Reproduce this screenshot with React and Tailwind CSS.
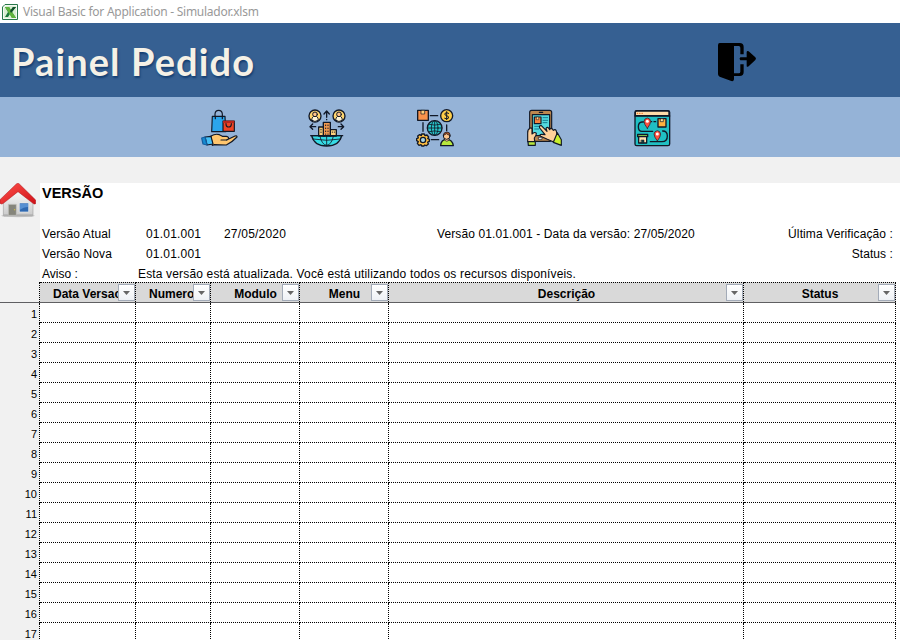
import React from "react";

const ARIAL = "font-['Liberation_Sans',Arial,sans-serif]";

const COLUMNS = [
  { label: "Data Versao", box: "pl-[13px]", align: "" },
  { label: "Numero", box: "pl-[13px]", align: "" },
  { label: "Modulo", box: "pl-px", align: "justify-center" },
  { label: "Menu", box: "pl-px", align: "justify-center" },
  { label: "Descrição", box: "pl-px", align: "justify-center" },
  { label: "Status", box: "pl-px", align: "justify-center" },
];

const GRID = "grid grid-cols-[40px_96px_75px_89px_89px_355px_152px] w-[896px]";

function ExcelLogo() {
  return (
    <svg className="h-4 w-4 shrink-0" viewBox="0 0 16 16">
      <path d="M3 .5h12.5v15H.5V3z" fill="#f4faf2" stroke="#28784a" />
      <path d="M2 4 4 2h10v12H2z" fill="#d9efd2" />
      <path d="M3 3h4l2 3 2-3h3l-4 5 4 6h-4L8 10l-2 3H3l3-5z" fill="#1d7a3c" />
      <path d="m3 3 4 0 7 11h-4z" fill="#60b43c" />
      <path d="m11 3-3 4 1 2 5-6z" fill="#124f2b" />
    </svg>
  );
}

function ExitIcon() {
  return (
    <svg className="h-[60px] w-20" viewBox="0 0 240 180">
      <path d="M59 39h60q12 0 12 12v22h-10V53q0-5-5-5h-14v82h14q5 0 5-5v-22h10v23q0 12-12 12h-17v10q0 7-8 5l-31-11q-9-3-9-11V46q0-7 5-7z" fill="#000" />
      <path d="M121 82h19V66q1-5 6-2l20 18q4 4 0 8l-20 19q-6 4-6-2V91h-19q-5-5 0-9z" fill="#000" />
    </svg>
  );
}

function BagsIcon() {
  return (
    <svg className="ml-[195px] h-[55px] w-[50px]" viewBox="0 0 150 165" stroke="#111827" strokeWidth="3.5" strokeLinejoin="round" strokeLinecap="round">
      <path d="M60 56V42q1-11 11-11t11 11v14" fill="none" />
      <path d="M52 49h38l2 46H50z" fill="#2ba5ec" />
      <path d="M61 56V49m21 7v-7" fill="none" />
      <path d="M84 63h34v31H84z" fill="#f04424" />
      <path d="M84 62h34v7H84z" fill="#b9261d" stroke="none" />
      <path d="M93 71q0 10 8 10t8-10" fill="none" />
      <path d="M48 108q13-8 25-4l9 5h12q9 2 6 8l-5 3 25-12q7-2 6 3-15 16-32 24l-36-1-6 2z" fill="#ffc66e" />
      <path d="M95 120H78" fill="none" />
      <path d="m30 111 18-2 6 23-18 3z" fill="#45bef5" />
      <path d="m20 114 10-3 6 24-12-3z" fill="#178bd1" stroke="#155d9f" />
    </svg>
  );
}

function Person({ x }) {
  return (
    <g transform={`translate(${x} 48)`}>
      <circle r="18" fill="#ffd56f" />
      <path d="M-10 13q1-13 10-13t10 13Q0 20-10 13z" fill="#fff4d4" strokeWidth="3" />
      <circle cy="-5" r="7" fill="#ffc58b" strokeWidth="3" />
    </g>
  );
}

function CityIcon() {
  return (
    <svg className="ml-[55px] h-[55px] w-[55px]" viewBox="0 0 165 165" stroke="#111827" strokeWidth="4" strokeLinejoin="round" strokeLinecap="round">
      <Person x={45} />
      <Person x={117} />
      <path d="M80 52V37m-8 5 8-9 8 9M80 58v1M47 80H32m6-8-8 8 8 8M115 80h15m-7-8 8 8-8 8" fill="none" />
      <path d="M35 107h90q-7 31-45 31T35 107z" fill="#35dbe5" />
      <path d="M38 117q42 8 84 0M60 109q5 25 20 27 15-2 20-27M80 109v27" fill="none" strokeWidth="2.5" />
      <path d="M56 81h17v27H56z" fill="#ffd17a" />
      <path d="M90 89h19v19H90z" fill="#ffd17a" />
      <path d="M70 67h21v41H70z" fill="#f39a50" />
      <path d="M77 75v2m7-2v2m-7 7v2m7-2v2m-7 7v2m7-2v2m-7 7v1m7-1v1M63 88v2m0 6v2m34-2v1m6-1v1" strokeWidth="3" />
      <path d="M32 107h96" />
    </svg>
  );
}

function NetworkIcon() {
  return (
    <svg className="ml-[55px] h-[55px] w-[50px]" viewBox="0 0 150 165" stroke="#111827" strokeWidth="4" strokeLinejoin="round" strokeLinecap="round">
      <path d="M61 47h22M39 68v26m71-19v17M64 119h22" />
      <path d="M23 31h32v30H23z" fill="#f8924b" />
      <path d="M34 31h10v11H34z" fill="#ffd37d" strokeWidth="2" />
      <circle cx="110" cy="47" r="18" fill="#ffcf49" />
      <path d="M116 40q-6-4-11 0-3 5 5 7 8 2 5 8-5 4-11 0m6-20v24" fill="none" strokeWidth="3" />
      <circle cx="74" cy="84" r="22" fill="#28c7cc" />
      <ellipse cx="74" cy="84" rx="10" ry="22" fill="none" strokeWidth="2.5" />
      <path d="M52 84h44M74 62v44M57 73q17 5 34 0M57 95q17-5 34 0" fill="none" strokeWidth="2.5" />
      <path d="m35 102 8 0 2 5 6-2 5 6-3 4 5 3v6l-5 2 2 6-6 5-5-2-2 3h-7l-2-4-6 2-5-6 3-5-5-3v-6l5-2-2-6 6-4 5 3z" fill="#ffbf42" />
      <circle cx="39" cy="120" r="8" fill="#a9d6e4" />
      <path d="M92 137q1-19 18-19t20 19z" fill="#b8e83d" />
      <path d="M104 110h13v11q-7 6-13 0z" fill="#ffc58b" strokeWidth="2" />
      <circle cx="110" cy="108" r="10" fill="#ffc58b" strokeWidth="3" />
      <path d="M100 106q1-10 11-10 9 0 10 10-9-1-12-5-3 4-9 5z" fill="#a85425" strokeWidth="2" />
    </svg>
  );
}

function TabletIcon() {
  return (
    <svg className="ml-[60px] h-[55px] w-[50px]" viewBox="0 0 150 165" stroke="#111827" strokeWidth="3.5" strokeLinejoin="round" strokeLinecap="round">
      <rect x="29" y="31" width="66" height="93" rx="6" fill="#bd874e" />
      <path d="M37 44h52v63H37z" fill="#53d9df" />
      <path d="M58 37h10" />
      <path d="M43 51h20v20H43z" fill="#f5843e" />
      <path d="M50 51h6v8h-6z" fill="#ffd68d" strokeWidth="1.5" />
      <path d="M69 53h14m-14 8h14m-14 7h12M44 79h14m-14 8h12" stroke="#147c91" strokeWidth="3" />
      <path d="M23 125V99q-1-10 8-15 6-1 5 6v12q9-8 13-2 1 5-6 14l1 11z" fill="#ffd19b" />
      <path d="M24 125h22v11H25z" fill="#b8e83d" />
      <path d="m101 126-19-8-20-9q-5-6 3-6l10 1-16-20q-3-8 5-7l17 17-3-9q5-6 9 1l2 3q3-7 8-2l3 4q6-5 9 2l3 16-11 17z" fill="#ffd19b" />
      <path d="m112 98 12 21v17l-24-9z" fill="#c9f02e" />
      <path d="M56 112h10v6H56z" fill="#fff" strokeWidth="2" />
    </svg>
  );
}

function MapPinMark({ x, y }) {
  return (
    <g transform={`translate(${x} ${y})`}>
      <path d="M0 20Q-10 7-10-1-9-10 0-11 9-10 10-1 10 7 0 20z" fill="#fb4f3e" strokeWidth="2" />
      <circle cy="-1" r="4.5" fill="#fff" stroke="none" />
    </g>
  );
}

function TrackingIcon() {
  return (
    <svg className="ml-[57px] h-[55px] w-[50px]" viewBox="0 0 150 165" stroke="#111827" strokeWidth="4" strokeLinejoin="round" strokeLinecap="round">
      <rect x="24" y="32" width="104" height="105" rx="5" fill="#20bfc3" />
      <path d="M25 47V37q0-4 4-4h93q4 0 4 4v10z" fill="#ffdca8" />
      <path d="M31 40h1m6 0h1m6 0h1" stroke="#f27a32" />
      <path d="M24 48h104" />
      <path d="M49 66H45q-11 1-11 14 0 14 11 14h32m30-1q14 0 14 15 0 17-16 17H70M72 65h2m7 0h5" fill="none" />
      <MapPinMark x={61} y={65} />
      <MapPinMark x={91} y={103} />
      <path d="M93 56h24v25H93z" fill="#ffb13f" />
      <path d="M101 56h8v9h-8z" fill="#ffe29b" strokeWidth="2" />
      <path d="M35 109h24v20H35z" fill="#ffe1b0" />
      <path d="M32 103h30v7H32z" fill="#79bd46" />
      <path d="M43 120h8v9h-8z" fill="#143c42" strokeWidth="1.5" />
    </svg>
  );
}

function HomeIcon() {
  return (
    <svg className="h-9 w-9" viewBox="0 99 108 108">
      <defs>
        <linearGradient id="roof" x1="0" y1="0" x2="1" y2="1">
          <stop offset="0" stopColor="#ff514b" />
          <stop offset="1" stopColor="#cf1017" />
        </linearGradient>
        <linearGradient id="wall" x1="0" y1="0" x2="0" y2="1">
          <stop offset="0" stopColor="#fff" />
          <stop offset="1" stopColor="#c9c9c9" />
        </linearGradient>
      </defs>
      <ellipse cx="54" cy="197" rx="50" ry="5" fill="#cfcfcf" />
      <path d="M10 155 54 113l45 42v40q0 3-3 3H13q-3 0-3-3z" fill="url(#wall)" stroke="#8d8d8d" strokeWidth="1.5" />
      <path d="M10 193h89v5H10z" fill="#b0b0b0" />
      <path d="M25 163h24v33H25z" fill="#85857b" stroke="#c7c7c3" strokeWidth="2" />
      <path d="M44 177v4" stroke="#d6c040" strokeWidth="3" />
      <path d="M58 159h28v27H58z" fill="#2f69b1" stroke="#eee" strokeWidth="2" />
      <path d="m60 161 24 0v10q-12-1-24 8z" fill="#5790d2" />
      <path d="M54 100q2 0 4 2l49 48v11q-5 3-8-1L54 125 10 160q-5 4-10 0v-11l49-47q3-2 5-2z" fill="url(#roof)" stroke="#a81319" strokeWidth="1.5" />
    </svg>
  );
}

function FilterButton() {
  return (
    <span className="absolute right-0 top-[1px] flex h-[17px] w-[17px] items-center justify-center border border-[#a3abb8] bg-linear-to-b from-white to-[#eef1f5]">
      <svg className="h-1 w-[7px]" viewBox="0 0 7 4">
        <path d="M0 0h7L3.5 4z" fill="#666" />
      </svg>
    </span>
  );
}

function InfoSheet() {
  return (
    <div className="grid h-[99px] grid-cols-[40px_1fr]">
      <div className="bg-[#f1f1f1]">
        <HomeIcon />
      </div>
      <div className="pl-0.5 text-[12px] leading-5 whitespace-nowrap text-black">
        <h2 className="h-[41px] text-[14.5px] font-bold leading-5">VERSÃO</h2>
        <div className="flex h-5">
          <span className="w-[104px] tracking-[0.12px]">Versão Atual</span>
          <span className="w-[78px] tracking-[0.2px]">01.01.001</span>
          <span className="w-[213px] tracking-[0.2px]">27/05/2020</span>
          <span className="tracking-[0.11px]">Versão 01.01.001 - Data da versão: 27/05/2020</span>
          <span className="mr-[7px] ml-auto tracking-[0.11px]">Última Verificação :</span>
        </div>
        <div className="flex h-5">
          <span className="w-[104px] tracking-[0.12px]">Versão Nova</span>
          <span className="tracking-[0.2px]">01.01.001</span>
          <span className="mr-[7px] ml-auto tracking-[0.08px]">Status :</span>
        </div>
        <div className="flex h-[18px]">
          <span className="w-24">Aviso :</span>
          <span className="tracking-[0.155px]">Esta versão está atualizada. Você está utilizando todos os recursos disponíveis.</span>
        </div>
      </div>
    </div>
  );
}

function VersionTable() {
  return (
    <div className="text-black">
      <div className={`${GRID} h-[21px] border-b border-[#5f5f62]`}>
        <div className="border-r border-dotted border-r-black bg-[#f1f1f1]" />
        {COLUMNS.map((c) => (
          <div key={c.label} className={`relative flex h-5 overflow-hidden border-t border-r border-dotted border-black bg-[#d9d9d9] text-[12px] leading-[22px] font-bold whitespace-nowrap ${c.box} ${c.align}`}>
            {c.label}
            <FilterButton />
          </div>
        ))}
      </div>
      {Array.from({ length: 17 }, (_, i) => (
        <div key={i} className={`${GRID} h-5`}>
          <div className="border-r border-dotted border-black bg-[#f1f1f1] pt-[3px] pr-0.5 text-right text-[11px] leading-[17px]">{i + 1}</div>
          {COLUMNS.map((c) => (
            <div key={c.label} className="border-r border-b border-dotted border-black" />
          ))}
        </div>
      ))}
    </div>
  );
}

export default function App() {
  return (
    <div className={`h-[640px] w-[900px] overflow-hidden bg-white ${ARIAL}`}>
      <div className="flex h-[23px] items-center gap-[5px] pl-0.5 font-['Noto_Sans','Open_Sans',sans-serif] text-[12px] tracking-[-0.25px] text-[#999]">
        <ExcelLogo />
        <span className="whitespace-nowrap">Visual Basic for Application - Simulador.xlsm</span>
      </div>
      <header className="flex h-[74px] bg-[#366092]">
        <h1 className="w-[700px] pl-[11px] font-['Lato',sans-serif] text-[38px] leading-[76px] font-bold tracking-[1.1px] text-[#f5f1e6] [text-shadow:1px_2px_2px_#153f72]">Painel Pedido</h1>
        <div className="pt-[7px]">
          <ExitIcon />
        </div>
      </header>
      <nav className="flex h-[60px] bg-[#95b3d7] pt-[3px]">
        <BagsIcon />
        <CityIcon />
        <NetworkIcon />
        <TabletIcon />
        <TrackingIcon />
      </nav>
      <div className="h-[26px] bg-[#f1f1f1]" />
      <InfoSheet />
      <VersionTable />
    </div>
  );
}
